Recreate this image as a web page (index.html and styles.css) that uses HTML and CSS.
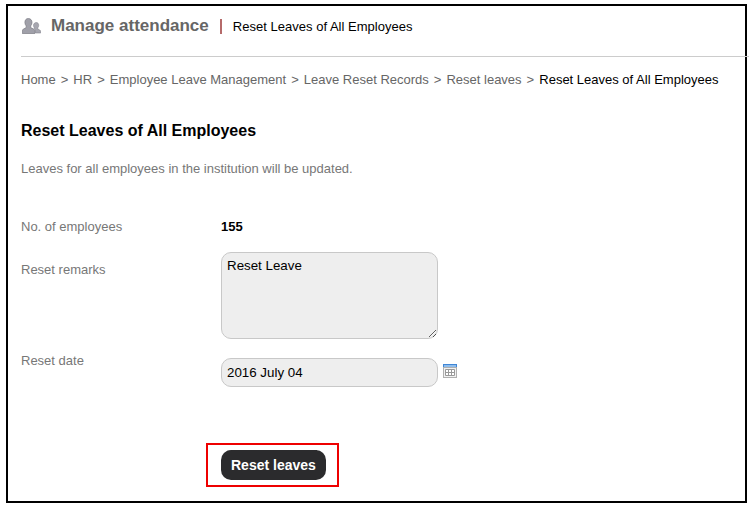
FILE: index.html
```html
<!DOCTYPE html>
<html lang="en">
<head>
    <meta charset="UTF-8">
    <meta name="viewport" content="width=device-width, initial-scale=1.0">
    <title>Reset Leaves of All Employees</title>
    <link rel="stylesheet" href="styles.css">
</head>
<body>

    <div class="frame">
        <div class="page-header">
            <svg class="people-icon" width="19" height="16" viewBox="0 0 19 16">
                <path fill="#a6a6af" stroke="#85858e" stroke-width=".6" d="M14.300 4.500c1.500 0 2.400 1.200 2.400 2.800 0 1-.4 1.900-.9 2.500v1.300l2.300 1.200c.4.200.6.600.6 1V15h-5.200v-2.500c0-.7-.4-1.300-1-1.600l-.2-.1V9.800c-.5-.6-.8-1.500-.8-2.500 0-1.600 1.300-2.800 2.800-2.800z"/>
                <path fill="#a0a0a9" stroke="#7b7b84" stroke-width=".7" d="M6.300 .5c2.300 0 3.700 1.700 3.700 3.900 0 1.400-.6 2.700-1.300 3.500v1.700l3.300 1.700c.6.300.9.800.9 1.400V15.500H.3v-2.800c0-.6.300-1.100.9-1.400l3-1.700V7.900C3.500 7.100 2.900 5.800 2.900 4.400 2.900 2.200 4.100 .5 6.300 .5z"/>
            </svg>
            <span class="module-title">Manage attendance</span>
            <span class="page-name">Reset Leaves of All Employees</span>
        </div>

        <div class="breadcrumb">
            <a href="#">Home</a><span class="sep">&gt;</span>
            <a href="#">HR</a><span class="sep">&gt;</span>
            <a href="#">Employee Leave Management</a><span class="sep">&gt;</span>
            <a href="#">Leave Reset Records</a><span class="sep">&gt;</span>
            <a href="#">Reset leaves</a><span class="sep">&gt;</span>
            <span class="current">Reset Leaves of All Employees</span>
        </div>

        <h2>Reset Leaves of All Employees</h2>
        <p class="hint">Leaves for all employees in the institution will be updated.</p>

        <form class="reset-form">
            <div class="form-row count-row">
                <label>No. of employees</label>
                <strong>155</strong>
            </div>
            <div class="form-row remarks-row">
                <label for="remarks">Reset remarks</label>
                <textarea id="remarks">Reset Leave</textarea>
            </div>
            <div class="form-row date-row">
                <label for="resetDate">Reset date</label>
                <div class="date-field">
                    <input type="text" id="resetDate" value="2016 July 04">
                    <svg class="calendar-icon" width="14" height="14" viewBox="0 0 14 14">
                        <rect x="0" y="0" width="14" height="4" fill="#3f86d6"/>
                        <rect x="1" y="1" width="12" height="2" fill="#8fbdec"/>
                        <rect x=".5" y="3.500" width="13" height="10" fill="#f1f1f1" stroke="#b0b0b0"/>
                        <path d="M2.500 5.500h9v6h-9zM5.500 5.500v6M8.500 5.500v6M2.500 8.500h9" fill="#fff" stroke="#999"/>
                    </svg>
                </div>
            </div>
            <div class="submit-box">
                <button type="button">Reset leaves</button>
            </div>
        </form>
    </div>

</body>
</html>
```

FILE: styles.css
```css
body {
    font-family: "Liberation Sans", Arial, sans-serif;
    background-color: #fff;
    margin: 0;
    overflow: hidden;
}
.frame {
    box-sizing: border-box;
    width: 741px;
    height: 499px;
    margin: 4px 0 0 6px;
    border: 2px solid #000;
    padding-left: 13px;
}
.page-header {
    display: flex;
    align-items: center;
    height: 40px;
    margin-right: -4px;
    border-bottom: 1px solid #ccc;
    padding-bottom: 10px;
}
.people-icon {
    margin: 0 10px 0 1px;
}
.module-title {
    font-size: 17px;
    font-weight: bold;
    color: #666;
}
.page-name {
    margin-left: 11px;
    padding-left: 11px;
    font-size: 13px;
    letter-spacing: .02px;
    color: #000;
    border-left: 2px solid #b56a6a;
    line-height: 15px;
}
.breadcrumb {
    margin-top: 15px;
    font-size: 13px;
    line-height: 15px;
    color: #666;
    white-space: nowrap;
}
.breadcrumb a {
    color: #666;
    text-decoration: none;
}
.breadcrumb .sep {
    margin: 0 1.450px 0 5px;
}
.breadcrumb .current {
    color: #000;
}
h2 {
    margin: 35px 0 0;
    font-size: 16px;
    line-height: 18px;
    color: #000;
}
.hint {
    margin: 21px 0 0;
    font-size: 13px;
    line-height: 15px;
    color: #777;
}
.reset-form {
    margin-top: 43px;
}
.form-row {
    display: grid;
    grid-template-columns: 200px auto;
    justify-content: start;
    font-size: 13px;
    line-height: 15px;
}
.form-row label {
    color: #777;
}
.form-row strong {
    color: #000;
}
.remarks-row {
    margin-top: 18px;
}
.remarks-row label {
    padding-top: 10px;
}
.date-row {
    margin-top: 19px;
}
.date-row label {
    margin-top: -5px;
}
textarea,
input {
    display: block;
    box-sizing: border-box;
    width: 217px;
    margin: 0;
    padding: 5px;
    font-family: "Liberation Sans", Arial, sans-serif;
    font-size: 13.333px;
    line-height: 15px;
    color: #000;
    background-color: #eee;
    border: 1px solid #c8c8c8;
    border-radius: 10px;
    outline: none;
}
textarea {
    height: 87px;
}
input {
    height: 29px;
}
.date-field {
    display: flex;
    align-items: flex-start;
}
.calendar-icon {
    margin: 6px 0 0 5px;
}
.submit-box {
    box-sizing: border-box;
    width: 133px;
    height: 44px;
    margin: 56px 0 0 185px;
    padding: 5px 0 0 13px;
    border: 2px solid #ee0000;
}
button {
    display: block;
    height: 30px;
    padding: 0 10px;
    font-family: "Liberation Sans", Arial, sans-serif;
    font-size: 14px;
    font-weight: bold;
    color: #fff;
    background-color: #2b2b2d;
    border: none;
    border-radius: 10px;
}
```
